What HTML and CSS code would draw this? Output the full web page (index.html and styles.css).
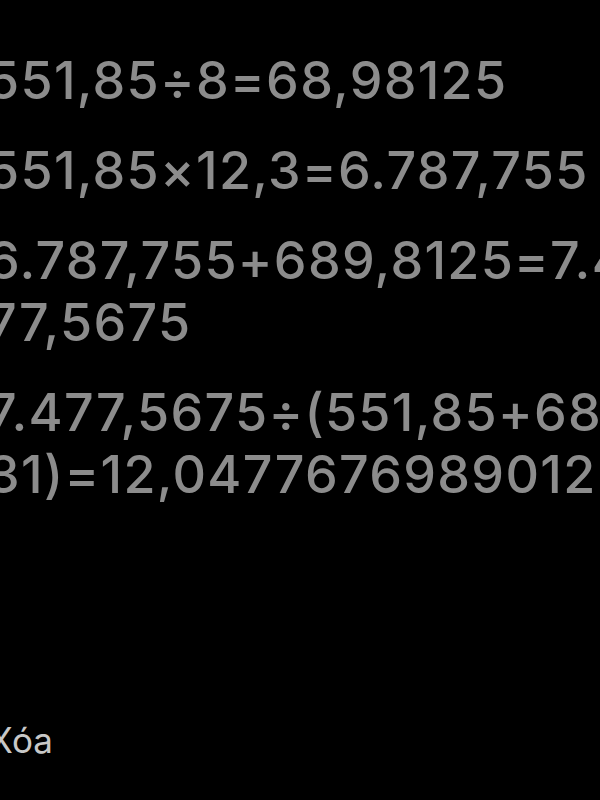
FILE: index.html
```html
<!DOCTYPE html>
<html lang="vi">
<head>
  <meta charset="UTF-8">
  <title>Lịch sử</title>
  <link rel="stylesheet" href="styles.css">
</head>
<body>
  <div class="history">
    <div class="entry">
      <span class="line">551,85÷8=68,98125</span>
    </div>
    <div class="entry">
      <span class="line">551,85×12,3=6.787,755</span>
    </div>
    <div class="entry">
      <span class="line">6.787,755+689,8125=7.4</span>
      <span class="line">77,5675</span>
    </div>
    <div class="entry">
      <span class="line">7.477,5675÷(551,85+68,9</span>
      <span class="line">31)=12,0477676989012</span>
    </div>
  </div>
  <div class="footer">
    <span class="clear-btn">Xóa</span>
  </div>
</body>
</html>
```

FILE: styles.css
```css
html, body {
  margin: 0;
  padding: 0;
  height: 100%;
}
body {
  background: #000;
  overflow: hidden;
  font-family: 'Inter', 'Liberation Sans', sans-serif;
  display: flex;
  flex-direction: column;
}
.history {
  margin-left: -13px;
  padding-top: 50px;
  display: flex;
  flex-direction: column;
  gap: 28px;
  flex: 1;
}
.entry {
  display: flex;
  flex-direction: column;
}
.line {
  font-size: 52px;
  font-weight: 500;
  letter-spacing: 1.3px;
  line-height: 62px;
  color: #8c8c8c;
  white-space: nowrap;
}
.footer {
  margin-left: -11px;
  padding-bottom: 38px;
}
.clear-btn {
  font-size: 35px;
  line-height: 44px;
  color: #c8c8c8;
}
```
